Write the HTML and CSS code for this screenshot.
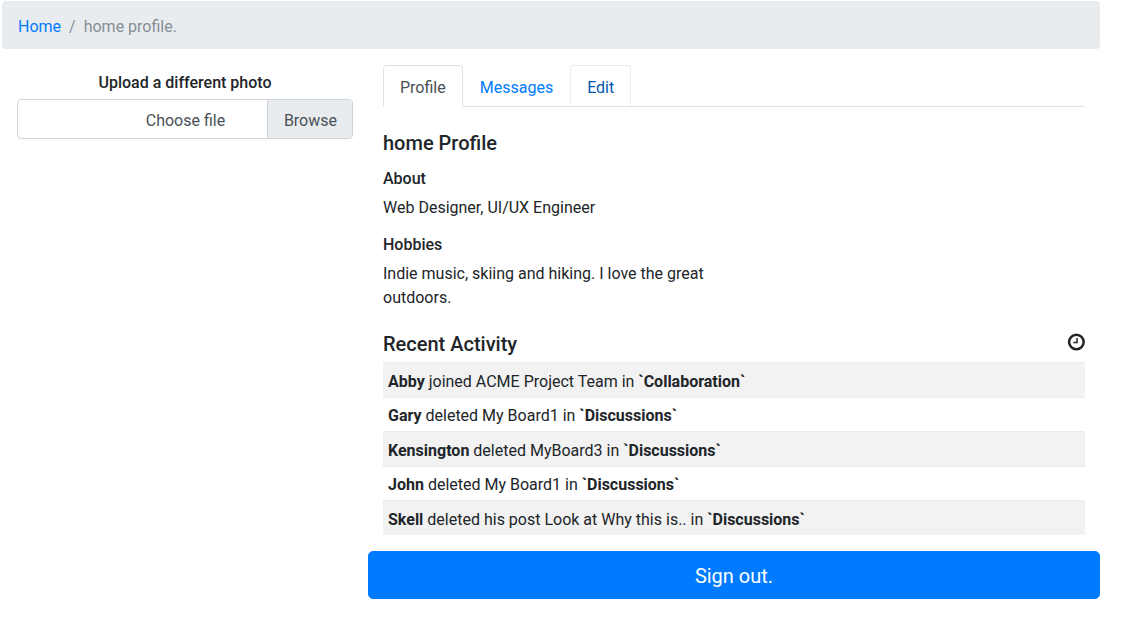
FILE: index.html
```html
<!DOCTYPE html>
<html lang="en">
<head>
<meta charset="utf-8">
<title>home profile</title>
<link rel="stylesheet" href="styles.css">
</head>
<body>
<div class="page">
  <nav aria-label="breadcrumb">
    <ol class="breadcrumb">
      <li><a href="#">Home</a></li>
      <li class="current">home profile.</li>
    </ol>
  </nav>
  <div class="columns">
    <aside class="photo">
      <h6 id="photo-title">Upload a different photo</h6>
      <button type="button" class="file" aria-describedby="photo-title">
        <span class="file-name">Choose file</span>
        <span class="file-browse">Browse</span>
      </button>
    </aside>
    <main class="main">
      <div class="content">
        <ul class="tabs">
          <li><a class="tab active" href="#">Profile</a></li>
          <li><a class="tab" href="#">Messages</a></li>
          <li><a class="tab hovered" href="#">Edit</a></li>
        </ul>
        <section>
          <h5>home Profile</h5>
          <div class="details">
            <h6>About</h6>
            <p>Web Designer, UI/UX Engineer</p>
            <h6>Hobbies</h6>
            <p>Indie music, skiing and hiking. I love the great outdoors.</p>
          </div>
          <h5 class="activity-title">Recent Activity
            <svg class="clock" viewBox="0 0 18 20" aria-hidden="true"><circle cx="9.4" cy="10" r="7.3"/><path class="hands" d="M10 6v4.6H6.4"/></svg>
          </h5>
          <table class="activity">
            <tbody>
              <tr><td><strong>Abby</strong> joined ACME Project Team in <strong>`Collaboration`</strong></td></tr>
              <tr><td><strong>Gary</strong> deleted My Board1 in <strong>`Discussions`</strong></td></tr>
              <tr><td><strong>Kensington</strong> deleted MyBoard3 in <strong>`Discussions`</strong></td></tr>
              <tr><td><strong>John</strong> deleted My Board1 in <strong>`Discussions`</strong></td></tr>
              <tr><td><strong>Skell</strong> deleted his post Look at Why this is.. in <strong>`Discussions`</strong></td></tr>
            </tbody>
          </table>
        </section>
      </div>
      <button type="button" class="sign-out">Sign out.</button>
    </main>
  </div>
</div>
</body>
</html>
```
FILE: styles.css
```css
*, *::before, *::after { box-sizing: border-box; }
body {
  margin: 0;
  background: #fff;
  color: #212529;
  font: 400 16px/24px Roboto, "Liberation Sans", sans-serif;
}
a { color: #007bff; text-decoration: none; }
h5, h6, p, ul, ol { margin: 0; padding: 0; }
ul, ol { list-style: none; }
h5 { font-size: 20px; line-height: 24px; font-weight: 500; margin-bottom: 14px; }
h6 { font-size: 16px; line-height: 20px; font-weight: 500; margin-bottom: 7px; }
p { margin-bottom: 15px; }
button { font: inherit; cursor: pointer; }

.page { margin: 1px 29px 0 2px; }
.breadcrumb {
  display: flex;
  padding: 14px 16px 10px;
  margin-bottom: 16px;
  border-radius: 4px;
  background: #e9ecef;
}
.breadcrumb .current { color: #868e96; }
.breadcrumb .current::before { content: "/"; padding: 0 8px; }

.columns { display: grid; grid-template-columns: 1fr 2fr; }
.photo { padding: 8px 15px 0; text-align: center; }
.photo h6 { margin-bottom: 6px; }
.file {
  display: flex;
  width: 100%;
  padding: 0;
  overflow: hidden;
  border: 1px solid #ced4da;
  border-radius: 4px;
  background: #fff;
  color: #495057;
}
.file-name { flex: 1; padding: 9px 0 5px 86px; }
.file-browse {
  padding: 9px 15px 5px 16px;
  border-left: 1px solid #ced4da;
  background: #e9ecef;
}

.content { padding: 0 15px; }
.tabs { display: flex; border-bottom: 1px solid #dee2e6; margin-bottom: 24px; }
.tab {
  display: block;
  padding: 10px 16px 6px;
  margin-bottom: -1px;
  border: 1px solid transparent;
  border-radius: 4px 4px 0 0;
}
.tab.active { color: #495057; background: #fff; border-color: #dee2e6 #dee2e6 #fff; }
.tab.hovered { color: #0056b3; border-color: #e9ecef #e9ecef #dee2e6; }
.details { width: 50%; }
.activity-title {
  display: flex;
  align-items: flex-start;
  justify-content: space-between;
  margin: 22px 0 6px;
}
.clock { width: 18px; height: 20px; fill: none; stroke: #212529; stroke-width: 2.5; }
.clock .hands { stroke-width: 1.5; }

.activity { width: 100%; margin-bottom: 16px; border-spacing: 0; }
.activity td { padding: 6px 5px 3px; border-top: 1px solid #e9ecef; }
.activity tr:nth-child(odd) { background: #f2f2f2; }
.activity tr:nth-child(odd) td { padding-top: 7px; }
.activity strong { font-weight: 700; }

.sign-out {
  display: block;
  width: 100%;
  padding: 9px 16px 7px;
  border: 1px solid #007bff;
  border-radius: 5px;
  background: #007bff;
  color: #fff;
  font-size: 20px;
  line-height: 30px;
}
```
